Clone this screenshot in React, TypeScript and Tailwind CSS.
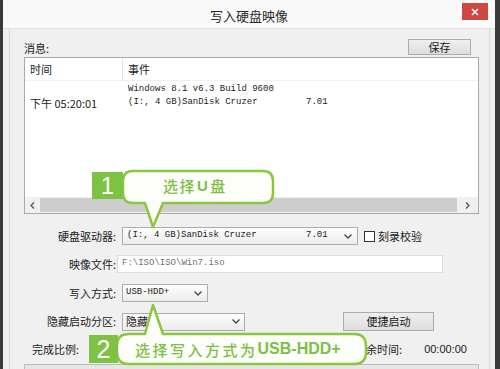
import React from "react";

const cjk = { fontFamily: '"Noto Sans CJK SC", "Liberation Sans", sans-serif' };
const mono = { fontFamily: '"Liberation Mono", "Noto Sans CJK SC", monospace' };

function Chevron() {
  return (
    <svg width="8" height="5" viewBox="0 0 8 5" className="shrink-0">
      <polyline points="0.5,0.5 4,4 7.5,0.5" fill="none" stroke="#444" strokeWidth="1.3" />
    </svg>
  );
}

function Label({ children }: { children: React.ReactNode }) {
  return (
    <div className="w-[92px] shrink-0 text-right text-[11px] text-[#1b1b1b] leading-none" style={cjk}>
      {children}
    </div>
  );
}

export default function App() {
  return (
    <div className="relative w-[500px] h-[369px] overflow-hidden bg-[#3a3a3a] flex">
      <div className="ml-[3px] w-[492px] h-full bg-[#f0f0f0] flex flex-col">
        {/* title bar */}
        <div className="relative h-[29px] shrink-0 bg-[#f9f9f9] flex items-center justify-center border-b border-[#e2e2e2]">
          <span className="text-[13px] text-[#2a2a2a] mt-[3px]" style={cjk}>写入硬盘映像</span>
          <div className="absolute right-[7px] top-[3px] w-[26px] h-[17px] bg-[#cd4840] flex items-center justify-center">
            <svg width="8" height="8" viewBox="0 0 8 8">
              <path d="M1 1 L7 7 M7 1 L1 7" stroke="#fff" strokeWidth="1.6" />
            </svg>
          </div>
        </div>
        {/* body */}
        <div className="flex-1 ml-[6px] mr-[5px] border-l border-r border-[#d9d9d9] bg-[#f0f0f0] pl-[14px] pr-[10px] pt-[10px] flex flex-col">
          <div className="h-[16px] flex items-center justify-between">
            <span className="text-[11px] text-[#1b1b1b] mt-[3px]" style={cjk}>消息:</span>
            <div className="mr-[8px] w-[63px] h-[16px] border border-[#acacac] bg-gradient-to-b from-[#efefef] to-[#dedede] flex items-center justify-center text-[11px] text-[#1b1b1b]" style={cjk}>
              保存
            </div>
          </div>
          {/* list */}
          <div className="mt-[2px] h-[157px] border border-[#a9a9a9] bg-white flex flex-col">
            <div className="h-[23px] flex items-center border-b border-[#f0f0f0] text-[11px] text-[#1b1b1b]" style={cjk}>
              <div className="w-[98px] h-full pl-[5px] flex items-center border-r border-[#e5e5e5]">时间</div>
              <div className="pl-[5px]">事件</div>
            </div>
            <div className="flex h-[15px] items-end">
              <div className="w-[98px]" />
              <div className="pl-[5px] text-[9px] text-[#222]" style={mono}>Windows 8.1 v6.3 Build 9600</div>
            </div>
            <div className="flex h-[14px] items-center">
              <div className="w-[98px] pl-[5px] text-[11px] text-[#222]" style={cjk}>下午 05:20:01</div>
              <div className="pl-[5px] text-[9px] text-[#222] flex" style={mono}>
                <span className="w-[178px] whitespace-pre">(I:, 4 GB)SanDisk Cruzer</span>
                <span>7.01</span>
              </div>
            </div>
            <div className="flex-1" />
            <div className="h-[16px] flex bg-[#f0f0f0]">
              <div className="w-[15px] flex items-center justify-center">
                <svg width="5" height="7" viewBox="0 0 5 7"><polyline points="4,0.5 1,3.5 4,6.5" fill="none" stroke="#555" strokeWidth="1.3" /></svg>
              </div>
              <div className="flex-1 my-[1px] bg-[#cdcdcd]" />
              <div className="w-[21px] flex items-center justify-center">
                <svg width="5" height="7" viewBox="0 0 5 7"><polyline points="1,0.5 4,3.5 1,6.5" fill="none" stroke="#555" strokeWidth="1.3" /></svg>
              </div>
            </div>
          </div>
          {/* drive */}
          <div className="mt-[13px] h-[18px] flex items-center">
            <Label>硬盘驱动器:</Label>
            <div className="ml-[6px] w-[236px] h-[18px] border border-[#acacac] bg-gradient-to-b from-[#fdfdfd] to-[#ececec] flex items-center pl-[4px] pr-[5px]">
              <span className="w-[179px] whitespace-pre text-[9px] text-[#222]" style={mono}>(I:, 4 GB)SanDisk Cruzer</span>
              <span className="flex-1 text-[9px] text-[#222]" style={mono}>7.01</span>
              <Chevron />
            </div>
            <div className="ml-[6px] w-[11px] h-[11px] border border-[#333] bg-white" />
            <span className="ml-[3px] text-[11px] text-[#1b1b1b]" style={cjk}>刻录校验</span>
          </div>
          {/* image file */}
          <div className="mt-[10px] h-[18px] flex items-center">
            <Label>映像文件:</Label>
            <div className="ml-[1px] w-[326px] h-[18px] border border-[#dadada] bg-white flex items-center pl-[4px]">
              <span className="text-[9px] text-[#707070]" style={mono}>F:\ISO\ISO\Win7.iso</span>
            </div>
          </div>
          {/* write mode */}
          <div className="mt-[11px] h-[18px] flex items-center">
            <Label>写入方式:</Label>
            <div className="ml-[6px] w-[86px] h-[18px] border border-[#acacac] bg-gradient-to-b from-[#fdfdfd] to-[#ececec] flex items-center pl-[3px] pr-[5px]">
              <span className="flex-1 text-[9px] text-[#222]" style={mono}>USB-HDD+</span>
              <Chevron />
            </div>
          </div>
          {/* hidden partition */}
          <div className="mt-[10px] h-[19px] flex items-center">
            <Label>隐藏启动分区:</Label>
            <div className="ml-[6px] w-[123px] h-[18px] border border-[#acacac] bg-gradient-to-b from-[#fdfdfd] to-[#ececec] flex items-center pl-[3px] pr-[4px]">
              <span className="flex-1 text-[11px] text-[#222]" style={cjk}>隐藏</span>
              <Chevron />
            </div>
            <div className="ml-[98px] w-[91px] h-[19px] border border-[#acacac] bg-gradient-to-b from-[#efefef] to-[#dedede] flex items-center justify-center text-[11px] text-[#1b1b1b]" style={cjk}>
              便捷启动
            </div>
          </div>
          {/* progress row */}
          <div className="mt-[9px] h-[18px] flex items-center text-[11px] text-[#1b1b1b]" style={cjk}>
            <span className="ml-[8px]">完成比例:</span>
            <span className="ml-[276px]">剩余时间:</span>
            <span className="ml-[22px]" style={{ fontFamily: '"Liberation Sans", sans-serif' }}>00:00:00</span>
          </div>
          <div className="mt-[6px] h-[14px] border border-[#bcbcbc] bg-[#e6e6e6]" />
        </div>
      </div>

      {/* callouts overlay */}
      <svg className="absolute left-0 top-0 pointer-events-none" width="500" height="369" viewBox="0 0 500 369">
        <path
          d="M 133 171 H 263 Q 273 171 273 181 V 193 Q 273 203 263 203 H 163 L 153 227 L 145 203 H 133 Q 123 203 123 193 V 181 Q 123 171 133 171 Z"
          fill="#fdfef9"
          stroke="#8cc63f"
          strokeWidth="2.5"
          strokeLinejoin="round"
        />
        <rect x="92" y="172" width="31" height="27" fill="#7dc242" />
        <path
          d="M 129 334 H 145 L 153 305 L 163 334 H 354 Q 366 334 366 346 V 352 Q 366 364 354 364 H 129 Q 117 364 117 352 V 346 Q 117 334 129 334 Z"
          fill="#fdfef9"
          stroke="#8cc63f"
          strokeWidth="2.5"
          strokeLinejoin="round"
        />
        <rect x="89" y="335" width="29" height="28" fill="#7dc242" />
      </svg>
      <div className="absolute left-[92px] top-[172px] w-[31px] h-[27px] flex items-center justify-center text-white text-[24px] leading-none" style={{ fontFamily: '"Liberation Sans", sans-serif' }}>
        1
      </div>
      <div className="absolute left-[163px] top-[178px] flex items-center text-[15px] leading-none text-[#7dbf46] font-medium tracking-[1.5px]" style={cjk}>
        选择<span className="mx-[1px] font-bold" style={{ fontFamily: '"Liberation Sans", sans-serif' }}>U</span>盘
      </div>
      <div className="absolute left-[89px] top-[335px] w-[29px] h-[28px] flex items-center justify-center text-white text-[25px] leading-none" style={{ fontFamily: '"Liberation Sans", sans-serif' }}>
        2
      </div>
      <div className="absolute left-[135px] top-[341px] flex items-center text-[15px] leading-none text-[#7dbf46]" style={cjk}>
        <span className="tracking-[2.5px] font-medium">选择写入方式为</span>
        <span className="text-[16px] font-bold" style={{ fontFamily: '"Liberation Sans", sans-serif' }}>USB-HDD+</span>
      </div>
    </div>
  );
}
